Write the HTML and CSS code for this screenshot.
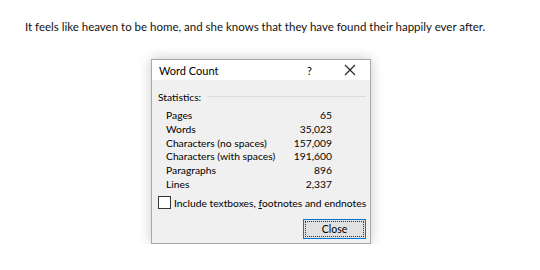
FILE: index.html
```html
<!DOCTYPE html>
<html lang="en">
<head>
    <meta charset="UTF-8">
    <title>Word Count</title>
    <link rel="stylesheet" href="styles.css">
</head>
<body>
<p class="doc-text">It feels like heaven to be home, and she knows that they have found their happily ever after.</p>

<!-- Word Count dialog -->
<div class="dialog">
    <div class="title-bar">
        <span class="title">Word Count</span>
        <span class="help">?</span>
        <svg class="close-x" width="12" height="12" viewBox="0 0 12 12">
            <path d="M1 1 L11 11 M11 1 L1 11" stroke="#222" stroke-width="1.1" fill="none"/>
        </svg>
    </div>
    <div class="body">
        <div class="group-label"><span>Statistics:</span><span class="rule"></span></div>
        <table class="stats">
            <tr><td>Pages</td><td class="num">65</td></tr>
            <tr><td>Words</td><td class="num">35,023</td></tr>
            <tr><td>Characters (no spaces)</td><td class="num">157,009</td></tr>
            <tr><td>Characters (with spaces)</td><td class="num">191,600</td></tr>
            <tr><td>Paragraphs</td><td class="num">896</td></tr>
            <tr><td>Lines</td><td class="num">2,337</td></tr>
        </table>
        <div class="check"><span class="box"></span><span class="check-text">Include textboxes, <u>f</u>ootnotes and endnotes</span></div>
        <div class="actions">
            <button class="close-btn"><span>Close</span></button>
        </div>
    </div>
</div>
</body>
</html>
```

FILE: styles.css
```css
body {
    margin: 0;
    padding: 0;
    background-color: #fff;
}
.doc-text {
    font-family: Lato, sans-serif;
    font-size: 11.5px;
    color: #111;
    margin: 19px 0 0 25px;
    line-height: 16px;
    white-space: nowrap;
}
.dialog {
    margin: 24px 0 0 151px;
    width: 218px;
    height: 183px;
    border: 1px solid #a8a8a8;
    background-color: #f0f0f0;
    box-shadow: 0 0 12px rgba(0, 0, 0, 0.22);
    font-family: Lato, sans-serif;
    font-size: 10.3px;
    font-variant-numeric: lining-nums;
    color: #000;
}
.title-bar {
    height: 20px;
    background-color: #fff;
    display: flex;
    align-items: center;
    padding: 0 0 0 7px;
}
.title {
    flex: 1;
    font-size: 11px;
}
.help {
    width: 37px;
    font-size: 11px;
}
.close-x {
    margin-right: 14px;
}
.body {
    padding: 10px 4px 0 6px;
}
.group-label {
    display: flex;
    align-items: center;
    gap: 6px;
    height: 13px;
}
.rule {
    flex: 1;
    border-top: 1px solid #dcdcdc;
}
.stats {
    border-collapse: collapse;
    margin: 6px 0 0 8px;
    width: 166px;
}
.stats td {
    padding: 0;
    height: 13.7px;
    line-height: 13px;
    white-space: nowrap;
}
.stats .num {
    text-align: right;
}
.check {
    display: flex;
    align-items: center;
    margin-top: 5px;
    gap: 3px;
    white-space: nowrap;
}
.box {
    width: 11px;
    height: 11px;
    border: 1px solid #333;
    background-color: #fff;
    flex: none;
}
.actions {
    display: flex;
    justify-content: flex-end;
    margin-top: 10px;
}
.close-btn {
    width: 63px;
    height: 20px;
    border: 1px solid #0078d7;
    background-color: #e1e1e1;
    padding: 1px;
    margin-right: 0;
    font-family: Lato, sans-serif;
    font-size: 10.5px;
}
.close-btn span {
    display: block;
    height: 100%;
    border: 1px dotted #333;
    box-sizing: border-box;
    line-height: 14px;
}
```
